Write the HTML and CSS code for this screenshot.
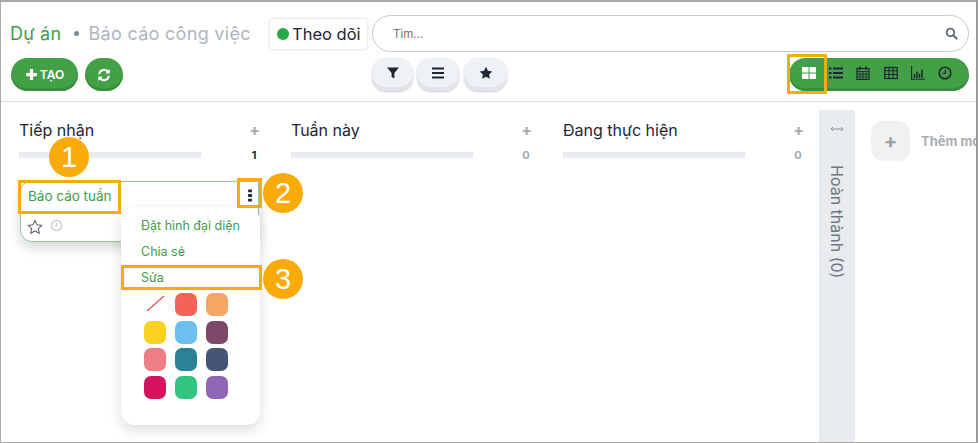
FILE: index.html
```html
<!DOCTYPE html>
<html lang="en">
<head>
  <meta charset="UTF-8">
  <title>Báo cáo công việc</title>
  <link rel="stylesheet" href="styles.css">
</head>
<body>
  <div class="frame">
    <header class="topbar">
      <div class="title-row">
        <div class="crumbs">
          <span class="crumb-link">Dự án</span>
          <span class="crumb-dot"></span>
          <span class="crumb-current">Báo cáo công việc</span>
        </div>
        <div class="follow"><span class="follow-dot"></span>Theo dõi</div>
        <div class="search">
          <span class="search-text">Tìm...</span>
          <svg class="search-icon" viewBox="0 0 16 16"><circle cx="6.7" cy="6.7" r="4.7" fill="none" stroke="#5f6b7a" stroke-width="2.2"/><path d="M10.2 10.2l4 4" stroke="#5f6b7a" stroke-width="2.6" stroke-linecap="round"/></svg>
        </div>
      </div>
      <div class="tool-row">
        <div class="tool-left">
          <button class="btn-green btn-create">
            <svg class="ic-plus" viewBox="0 0 12 12"><path d="M6 1v10M1 6h10" stroke="#fff" stroke-width="3"/></svg>TẠO
          </button>
          <button class="btn-green btn-refresh">
            <svg class="ic-refresh" viewBox="0 0 16 16" fill="none" stroke="#fff" stroke-width="2.4"><path d="M2.5 7A5.6 5.6 0 0 1 12.4 4.2"/><path d="M13.5 9A5.6 5.6 0 0 1 3.6 11.8"/><path d="M14.5 1.2v5h-5z" fill="#fff" stroke="none"/><path d="M1.5 14.8v-5h5z" fill="#fff" stroke="none"/></svg>
          </button>
        </div>
        <div class="tool-mid">
          <button class="btn-soft btn-a">
            <svg class="ic" viewBox="0 0 14 14"><path d="M1 1.5h12L8.4 7v5.5L5.6 11V7z" fill="#1d2733"/></svg>
          </button>
          <button class="btn-soft btn-b">
            <svg class="ic" viewBox="0 0 14 14"><path d="M1 2.5h12M1 7h12M1 11.5h12" stroke="#1d2733" stroke-width="2.2"/></svg>
          </button>
          <button class="btn-soft btn-c">
            <svg class="ic" viewBox="0 0 14 14"><path d="M7 .8l1.9 4 4.4.6-3.2 3 .8 4.4L7 10.7l-3.900 2.100.8-4.400-3.200-3 4.400-.6z" fill="#1d2733"/></svg>
          </button>
        </div>
        <div class="views">
          <svg class="ic ic-on" viewBox="0 0 14 14"><path d="M0 1h6.500v5.500H0zM7.500 1H14v5.500H7.500zM0 7.500h6.500V13H0zM7.500 7.500H14V13H7.500z" fill="#fff"/></svg>
          <svg class="ic" viewBox="0 0 14 14"><path d="M0 2.500h2.500M4 2.500h10M0 7h2.500M4 7h10M0 11.500h2.500M4 11.500h10" stroke="#1d2733" stroke-width="2"/></svg>
          <svg class="ic" viewBox="0 0 14 14" fill="none" stroke="#1d2733"><rect x="1" y="2.500" width="12" height="11" stroke-width="1.200"/><path d="M1 5.500h12M1 8.200h12M1 10.900h12M4 5.500v8M7 5.500v8M10 5.500v8" stroke-width=".8"/><path d="M4 .5v3.500M10 .5v3.500" stroke-width="1.600"/></svg>
          <svg class="ic" viewBox="0 0 14 14" fill="none" stroke="#1d2733"><rect x=".8" y="1.500" width="12.400" height="11" stroke-width="1.300"/><path d="M.8 4.800h12.400M.8 8.500h12.400M4.900 1.500v11M9.100 1.500v11" stroke-width="1.100"/></svg>
          <svg class="ic" viewBox="0 0 14 14" fill="none" stroke="#1d2733"><path d="M.6 0v13.300H14" stroke-width="1.100"/><path d="M3.500 12V8M6 12V5.500M8.500 12V7.500M11 12V3.500" stroke-width="1.500"/></svg>
          <svg class="ic" viewBox="0 0 14 14" fill="none" stroke="#1d2733"><circle cx="7" cy="7" r="5.800" stroke-width="1.600"/><path d="M7.300 3.500v4H4.500" stroke-width="1.200"/></svg>
        </div>
      </div>
    </header>

    <main class="board">
      <section class="column">
        <div class="col-head"><h2>Tiếp nhận</h2><span class="col-add">+</span></div>
        <div class="col-meter"><div class="col-bar"></div><span class="col-count col-count-dark">1</span></div>
        <article class="card">
          <div class="card-title">Báo cáo tuần</div>
          <svg class="card-more" viewBox="0 0 4 14"><path d="M0 .5h4v3H0zM0 5.500h4v3H0zM0 10.500h4v3H0z" fill="#1d2733"/></svg>
          <div class="card-foot">
            <svg class="card-star" viewBox="0 0 16 16"><path d="M8 1.500l2 4.300 4.700.6-3.400 3.200.9 4.600L8 11.900l-4.200 2.300.9-4.600L1.300 6.400 6 5.800z" fill="none" stroke="#5f6670" stroke-width="1.100"/></svg>
            <svg class="card-clock" viewBox="0 0 14 14" fill="none" stroke="#c4c7cb"><circle cx="7" cy="7" r="5.500" stroke-width="1.500"/><path d="M7.300 3.800v3.700H4.800" stroke-width="1.100"/></svg>
          </div>
          <div class="menu">
            <div class="menu-item">Đặt hình đại diện</div>
            <div class="menu-item">Chia sẻ</div>
            <div class="menu-item">Sửa</div>
            <div class="swatches">
              <svg class="swatch-none" viewBox="0 0 22 22"><path d="M3 18L20 3" stroke="#ef4b55" stroke-width="1.200"/></svg>
              <span class="swatch sw-red"></span>
              <span class="swatch sw-orange"></span>
              <span class="swatch sw-yellow"></span>
              <span class="swatch sw-sky"></span>
              <span class="swatch sw-plum"></span>
              <span class="swatch sw-pink"></span>
              <span class="swatch sw-teal"></span>
              <span class="swatch sw-navy"></span>
              <span class="swatch sw-crimson"></span>
              <span class="swatch sw-green"></span>
              <span class="swatch sw-purple"></span>
            </div>
          </div>
        </article>
      </section>

      <section class="column">
        <div class="col-head"><h2>Tuần này</h2><span class="col-add">+</span></div>
        <div class="col-meter"><div class="col-bar"></div><span class="col-count">0</span></div>
      </section>

      <section class="column">
        <div class="col-head"><h2>Đang thực hiện</h2><span class="col-add">+</span></div>
        <div class="col-meter"><div class="col-bar"></div><span class="col-count">0</span></div>
      </section>

      <aside class="done-col">
        <svg class="done-arrows" viewBox="0 0 14 6"><path d="M1 3h12M3 1L1 3l2 2M11 1l2 2-2 2" fill="none" stroke="#8d949b" stroke-width="1"/></svg>
        <div class="done-label">Hoàn thành (0)</div>
      </aside>

      <div class="add-col">
        <span class="add-box">+</span>
        <span class="add-label">Thêm mới</span>
      </div>
    </main>

    <!-- tutorial marks drawn over the screen -->
    <div class="mark mark-view"></div>
    <div class="mark mark-title"></div>
    <div class="mark mark-more"></div>
    <div class="mark mark-edit"></div>
    <div class="num num-1">1</div>
    <div class="num num-2">2</div>
    <div class="num num-3">3</div>
  </div>
</body>
</html>
```

FILE: styles.css
```css
* {
  box-sizing: border-box;
}
body {
  margin: 0;
  background-color: #fff;
  font-family: Inter, 'Noto Sans', sans-serif;
  color: #1d2733;
}
button {
  font-family: inherit;
  border: none;
  cursor: pointer;
}
.frame {
  position: relative;
  width: 978px;
  height: 443px;
  overflow: hidden;
  border-top: 2px solid #a9a9a9;
  border-left: 1px solid #a9a9a9;
  border-right: 2px solid #9a9a9a;
  border-bottom: 1px solid #a9a9a9;
}
.topbar {
  height: 100px;
  padding: 13px 7px 0 9px;
  border-bottom: 1px solid #dcdcdc;
}
.title-row {
  display: flex;
  align-items: center;
  height: 37px;
}
.crumbs {
  display: flex;
  align-items: center;
  width: 260px;
  font-size: 18px;
  letter-spacing: .3px;
}
.crumb-link {
  color: #3f9c4b;
}
.crumb-dot {
  width: 5px;
  height: 5px;
  margin: 0 9px 0 13px;
  border-radius: 50%;
  background-color: #7c8593;
}
.crumb-current {
  color: #aeb5c0;
}
.follow {
  display: flex;
  align-items: center;
  gap: 3px;
  width: 97px;
  height: 30px;
  padding-left: 7px;
  border-radius: 3px;
  background-color: #fff;
  box-shadow: 0 0 3px rgba(0, 0, 0, 0.22);
  font-size: 16.5px;
}
.follow-dot {
  width: 12px;
  height: 12px;
  border-radius: 50%;
  background-color: #28a745;
}
.search {
  display: flex;
  align-items: center;
  justify-content: space-between;
  flex: 1;
  height: 37px;
  margin-left: 5px;
  padding: 0 10px 0 20px;
  border: 1px solid #c9c9c9;
  border-radius: 19px;
}
.search-text {
  font-size: 11.5px;
  color: #7d6f68;
}
.search-icon {
  width: 13px;
  height: 13px;
}
.tool-row {
  display: flex;
  align-items: flex-start;
  margin-top: 6px;
}
.tool-left {
  display: flex;
  gap: 7px;
  width: 362px;
  padding-left: 1px;
}
.btn-green {
  display: flex;
  align-items: center;
  justify-content: center;
  height: 33px;
  border-radius: 17px;
  background-color: #43a047;
  box-shadow: inset 0 -3px 0 #388e3c;
  color: #fff;
  font-size: 12px;
  font-weight: 600;
}
.btn-create {
  gap: 2px;
  width: 67px;
  padding: 0;
}
.btn-refresh {
  width: 38px;
  padding: 0;
}
.ic-plus {
  width: 13px;
  height: 13px;
}
.ic-refresh {
  width: 14px;
  height: 14px;
}
.tool-mid {
  display: flex;
  gap: 4px;
}
.btn-soft {
  display: flex;
  align-items: center;
  justify-content: center;
  height: 33px;
  padding: 0 0 3px;
  border-radius: 14px;
  background-color: #eef1f6;
  box-shadow: inset 0 -4px 0 #dfe3ec, 0 1px 2px rgba(0, 0, 0, 0.2);
}
.btn-a {
  width: 41px;
}
.btn-b {
  width: 42px;
}
.btn-c {
  width: 43px;
  margin-left: 1px;
}
.ic {
  width: 14px;
  height: 14px;
}
.views {
  display: flex;
  align-items: center;
  justify-content: space-between;
  width: 180px;
  height: 33px;
  margin-left: auto;
  padding: 0 17px 3px 13px;
  border-radius: 17px;
  background-color: #43a047;
  box-shadow: inset 0 -3px 0 #388e3c;
}
.board {
  display: flex;
  height: 340px;
  padding: 8px 0 0 18px;
}
.column {
  width: 272px;
  flex: none;
}
.col-head {
  display: flex;
  align-items: center;
  justify-content: space-between;
  width: 241px;
  height: 26px;
  margin-top: 7px;
}
.col-head h2 {
  margin: 0;
  font-size: 16px;
  font-weight: 400;
}
.col-add {
  font-size: 16px;
  font-weight: 700;
  color: #a5abb2;
}
.col-meter {
  display: flex;
  align-items: center;
  justify-content: space-between;
  width: 241px;
  height: 16px;
  margin-top: 4px;
}
.col-bar {
  width: 182px;
  height: 6px;
  background-color: #e9ecef;
}
.col-count {
  width: 12px;
  font-size: 11px;
  font-weight: 700;
  text-align: center;
  color: #a5abb2;
}
.col-count-dark {
  color: #1d2733;
}
.card {
  position: relative;
  width: 239px;
  height: 61px;
  margin: 18px 0 0 1px;
  border: 1px solid #9cc3a0;
  border-radius: 10px 0 12px 12px;
  background-color: #fff;
  box-shadow: 0 6px 12px rgba(0, 0, 0, 0.16);
}
.card-title {
  padding: 6px 0 0 7px;
  font-size: 13.5px;
  color: #3f9c4b;
}
.card-more {
  position: absolute;
  top: 7px;
  right: 6px;
  width: 4px;
  height: 13px;
}
.card-foot {
  display: flex;
  align-items: center;
  gap: 7px;
  padding: 15px 0 0 6px;
}
.card-star {
  width: 16px;
  height: 16px;
}
.card-clock {
  width: 13px;
  height: 13px;
  margin-top: -3px;
}
.menu {
  position: absolute;
  top: 25px;
  left: 100px;
  width: 139px;
  height: 218px;
  padding: 7px 0 0;
  border-radius: 14px;
  background-color: #fff;
  box-shadow: 0 5px 14px rgba(0, 0, 0, 0.14);
  z-index: 2;
}
.menu-item {
  height: 26px;
  padding-left: 20px;
  font-size: 12.5px;
  line-height: 24px;
  color: #3f9c4b;
}
.swatches {
  display: grid;
  grid-template-columns: repeat(3, 22px);
  grid-auto-rows: 23px;
  gap: 4.500px 9px;
  margin: 1px 0 0 23px;
}
.swatch {
  border-radius: 7px;
}
.swatch-none {
  width: 22px;
  height: 22px;
}
.sw-red { background-color: #f2635a; }
.sw-orange { background-color: #f6a663; }
.sw-yellow { background-color: #f9d221; }
.sw-sky { background-color: #6cc0ef; }
.sw-plum { background-color: #804868; }
.sw-pink { background-color: #ec7e84; }
.sw-teal { background-color: #2c8098; }
.sw-navy { background-color: #465475; }
.sw-crimson { background-color: #d6135f; }
.sw-green { background-color: #31c581; }
.sw-purple { background-color: #9266b7; }
.done-col {
  flex: none;
  width: 36px;
  height: 332px;
  margin-left: -16px;
  padding-top: 16px;
  background-color: #e9ecef;
  text-align: center;
}
.done-arrows {
  display: block;
  width: 14px;
  height: 6px;
  margin: 0 auto;
}
.done-label {
  margin: 33px auto 0;
  writing-mode: vertical-rl;
  font-size: 16px;
  color: #6f7780;
  line-height: 36px;
}
.add-col {
  display: flex;
  align-items: center;
  flex: none;
  gap: 11px;
  height: 40px;
  margin: 11px 0 0 16px;
}
.add-box {
  display: flex;
  align-items: center;
  justify-content: center;
  width: 39px;
  height: 40px;
  border-radius: 12px;
  background-color: #f0f1f3;
  font-size: 20px;
  font-weight: 700;
  color: #9b9fa5;
}
.add-label {
  font-size: 13px;
  font-weight: 700;
  color: #a9adb2;
  white-space: nowrap;
}
.mark {
  position: absolute;
  border: 3px solid #f9ab0a;
  z-index: 3;
}
.mark-view {
  top: 52px;
  left: 786px;
  width: 40px;
  height: 40px;
}
.mark-title {
  top: 178px;
  left: 17px;
  width: 103px;
  height: 34px;
}
.mark-more {
  top: 176px;
  left: 236px;
  width: 25px;
  height: 30px;
}
.mark-edit {
  top: 263px;
  left: 120px;
  width: 141px;
  height: 25px;
}
.num {
  position: absolute;
  display: flex;
  align-items: center;
  justify-content: center;
  width: 40px;
  height: 40px;
  border-radius: 50%;
  background-color: #f9ab0a;
  color: #fff;
  font-family: 'Liberation Sans', sans-serif;
  font-size: 29px;
  z-index: 4;
}
.num-1 {
  top: 135px;
  left: 48px;
}
.num-2 {
  top: 171px;
  left: 262px;
}
.num-3 {
  top: 257px;
  left: 262px;
}
```
